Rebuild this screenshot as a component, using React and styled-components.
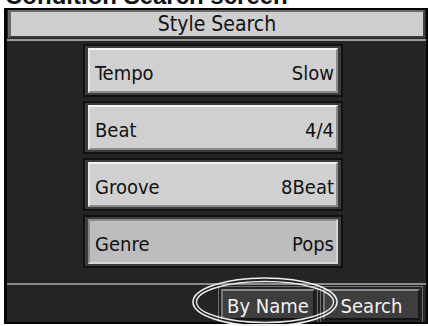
import React from "react";
import styled, { createGlobalStyle } from "styled-components";

const Global = createGlobalStyle`
  html, body { margin: 0; padding: 0; background: #fff; }
  body { width: 428px; height: 326px; overflow: hidden; }
`;

const Page = styled.div`
  position: relative;
  width: 428px;
  height: 326px;
  overflow: hidden;
`;

const Heading = styled.div`
  height: 8px;
  overflow: hidden;
  padding-left: 5px;
  font-family: "Liberation Sans", Arial, sans-serif;
  font-weight: bold;
  font-size: 24px;
  line-height: 24px;
  color: #111;
  white-space: nowrap;
  & > span { display: block; margin-top: -16px; }
`;

const Screen = styled.div`
  margin-left: 4px;
  width: 424px;
  height: 316px;
  box-sizing: border-box;
  background: #242424;
  border: 2px solid #050505;
  border-left-width: 3px;
  display: flex;
  flex-direction: column;
  font-family: "DejaVu Sans Condensed", "DejaVu Sans", sans-serif;
`;

const TitleBar = styled.div`
  margin: 0 1px 0 1px;
  height: 28px;
  box-sizing: border-box;
  background: #cfcfcf;
  border-top: 2px solid #6a6a6a;
  border-left: 3px solid #6a6a6a;
  border-right: 2px solid #444;
  border-bottom: 2px solid #3a3a3a;
  display: flex;
  align-items: center;
  justify-content: center;
  color: #111;
  font-size: 21px;
  line-height: 1;
  padding-top: 1px;
`;

const TitleRule = styled.div`
  height: 2px;
  margin-top: 1px;
  background: #9a9a9a;
`;

const List = styled.div`
  flex: 1;
  display: flex;
  flex-direction: column;
  gap: 4px;
  padding: 3px 0 0 76px;
`;

const Row = styled.div`
  width: 260px;
  height: 53px;
  box-sizing: border-box;
  background: #3c3c3c;
  border: 2px solid #111;
  padding: 2px 3px 2px 3px;
`;

const RowFace = styled.div`
  height: 100%;
  box-sizing: border-box;
  background: ${(p) => (p.$active ? "#bdbdbd" : "#d0d0d0")};
  border-top: 2px solid ${(p) => (p.$active ? "#8a8a8a" : "#f4f4f4")};
  border-left: 2px solid ${(p) => (p.$active ? "#8a8a8a" : "#e8e8e8")};
  border-bottom: 2px solid ${(p) => (p.$active ? "#d8d8d8" : "#8a8a8a")};
  border-right: 2px solid ${(p) => (p.$active ? "#d8d8d8" : "#8a8a8a")};
  display: flex;
  align-items: center;
  justify-content: space-between;
  padding: 5px 2px 0 5px;
  color: #111;
  font-size: 20px;
  line-height: 1;
`;

const BottomRule = styled.div`
  height: 2px;
  background: #8a8a8a;
`;

const BottomBar = styled.div`
  height: 37px;
  box-sizing: border-box;
  display: flex;
  justify-content: flex-end;
  align-items: stretch;
  gap: 2px;
  padding: 1px 3px 0 0;
`;

const ButtonFrame = styled.div`
  border: 1px solid #6e6e6e;
  border-bottom: none;
  padding: 2px;
  display: flex;
`;

const Button = styled.div`
  width: ${(p) => p.$w}px;
  box-sizing: border-box;
  background: #3e3e3e;
  border-top: 2px solid #8a8a8a;
  border-left: 2px solid #777;
  border-right: 2px solid #1a1a1a;
  border-bottom: 2px solid #151515;
  color: #f2f2f2;
  font-size: 20px;
  line-height: 1;
  display: flex;
  align-items: center;
  justify-content: center;
  padding-top: 2px;
`;

const Callout = styled.svg`
  position: absolute;
  left: 0;
  top: 0;
  pointer-events: none;
`;

const rows = [
  { label: "Tempo", value: "Slow" },
  { label: "Beat", value: "4/4" },
  { label: "Groove", value: "8Beat" },
  { label: "Genre", value: "Pops", active: true },
];

export default function App() {
  return (
    <Page>
      <Global />
      <Heading>
        <span>Condition Search screen</span>
      </Heading>
      <Screen>
        <TitleBar>Style Search</TitleBar>
        <TitleRule />
        <List>
          {rows.map((r) => (
            <Row key={r.label}>
              <RowFace $active={r.active}>
                <span>{r.label}</span>
                <span>{r.value}</span>
              </RowFace>
            </Row>
          ))}
        </List>
        <BottomRule />
        <BottomBar>
          <ButtonFrame>
            <Button $w={94}>By Name</Button>
          </ButtonFrame>
          <ButtonFrame>
            <Button $w={97}>Search</Button>
          </ButtonFrame>
        </BottomBar>
      </Screen>
      <Callout width="428" height="326" viewBox="0 0 428 326">
        <ellipse cx="265" cy="302" rx="72" ry="24" fill="none" stroke="#f0f0f0" strokeWidth="1.6" />
        <ellipse cx="265" cy="302" rx="68.5" ry="20.5" fill="none" stroke="#e8e8e8" strokeWidth="1.4" />
      </Callout>
    </Page>
  );
}
